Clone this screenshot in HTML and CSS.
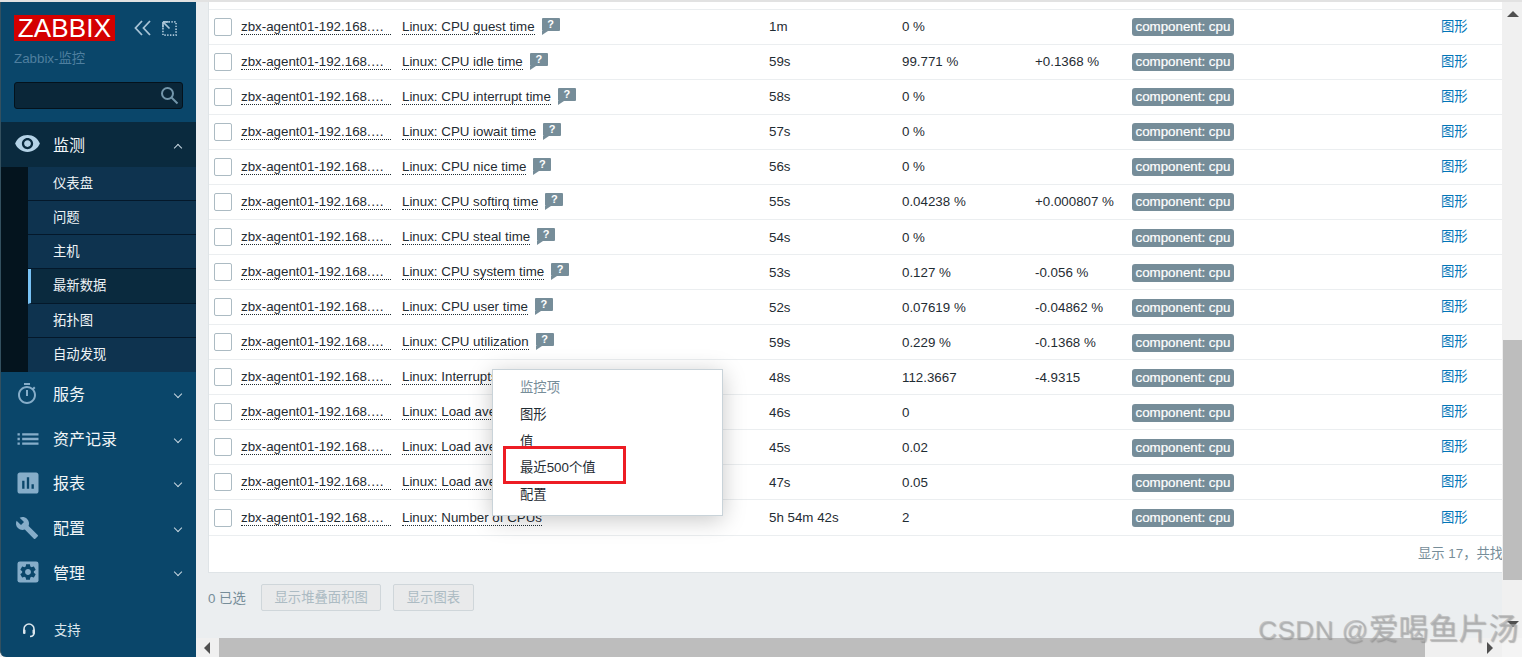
FILE: index.html
```html
<!DOCTYPE html>
<html lang="zh-CN">
<head>
    <meta charset="UTF-8">
    <title>最新数据</title>
    <link rel="stylesheet" href="styles.css">
</head>
<body>
    <div class="top-strip"></div>
    <div class="app">
        <aside class="sidebar">
            <div class="brand-row">
                <div class="logo">ZABBIX</div>
                <svg class="tool-icon" width="18" height="16" viewBox="0 0 18 16"><path d="M8 1 1.500 8 8 15M16 1 9.500 8 16 15"/></svg>
                <svg class="tool-icon expand" width="15" height="15" viewBox="0 0 16 16"><path d="M4 1h11v14H1V4" stroke-dasharray="1.500 1.500"/><path d="M1 1h6M1 1v6M1 1l7 7"/></svg>
            </div>
            <div class="server-name">Zabbix-监控</div>
            <div class="search">
                <svg width="19" height="19" viewBox="0 0 19 19"><circle cx="7.500" cy="7.500" r="5.500"/><path d="m11.500 11.500 6 6"/></svg>
            </div>

            <nav class="nav">
                <div class="nav-item active">
                    <svg class="nav-icon eye" viewBox="0 0 24 24"><path d="M12 4.500C7 4.500 2.730 7.610 1 12c1.730 4.390 6 7.500 11 7.500s9.270-3.110 11-7.500c-1.730-4.390-6-7.500-11-7.500zM12 17c-2.760 0-5-2.240-5-5s2.240-5 5-5 5 2.240 5 5-2.240 5-5 5zm0-8c-1.660 0-3 1.340-3 3s1.340 3 3 3 3-1.340 3-3-1.340-3-3-3z"/></svg>
                    <span class="nav-label">监测</span>
                    <span class="chevron up"></span>
                </div>
                <div class="subnav">
                    <div class="sub-item">仪表盘</div>
                    <div class="sub-item">问题</div>
                    <div class="sub-item">主机</div>
                    <div class="sub-item current">最新数据</div>
                    <div class="sub-item">拓扑图</div>
                    <div class="sub-item">自动发现</div>
                </div>
                <div class="nav-item">
                    <svg class="nav-icon small" viewBox="0 0 24 24"><path d="M15 1H9v2h6V1zm-4 13h2V8h-2v6zm8.030-6.610 1.420-1.420c-.430-.510-.900-.990-1.410-1.410l-1.420 1.420C16.070 4.740 14.120 4 12 4c-4.970 0-9 4.030-9 9s4.020 9 9 9 9-4.030 9-9c0-2.120-.740-4.070-1.970-5.610zM12 20c-3.870 0-7-3.130-7-7s3.130-7 7-7 7 3.130 7 7-3.130 7-7 7z"/></svg>
                    <span class="nav-label">服务</span>
                    <span class="chevron"></span>
                </div>
                <div class="nav-item">
                    <svg class="nav-icon" viewBox="0 0 24 24"><path d="M3 13h2v-2H3v2zm0 4h2v-2H3v2zm0-8h2V7H3v2zm4 4h14v-2H7v2zm0 4h14v-2H7v2zM7 7v2h14V7H7z"/></svg>
                    <span class="nav-label">资产记录</span>
                    <span class="chevron"></span>
                </div>
                <div class="nav-item">
                    <svg class="nav-icon" viewBox="0 0 24 24"><path d="M19 3H5c-1.100 0-2 .900-2 2v14c0 1.100.900 2 2 2h14c1.100 0 2-.900 2-2V5c0-1.100-.900-2-2-2zM9 17H7v-7h2v7zm4 0h-2V7h2v10zm4 0h-2v-4h2v4z"/></svg>
                    <span class="nav-label">报表</span>
                    <span class="chevron"></span>
                </div>
                <div class="nav-item">
                    <svg class="nav-icon small" viewBox="0 0 24 24"><path d="M22.700 19l-9.100-9.100c.900-2.300.400-5-1.500-6.900-2-2-5-2.400-7.400-1.300L9 6 6 9 1.600 4.700C.400 7.100.900 10.100 2.900 12.100c1.900 1.900 4.600 2.400 6.900 1.500l9.100 9.100c.400.400 1 .400 1.400 0l2.300-2.300c.500-.400.500-1.100.100-1.400z"/></svg>
                    <span class="nav-label">配置</span>
                    <span class="chevron"></span>
                </div>
                <div class="nav-item">
                    <svg class="nav-icon" viewBox="0 0 24 24"><rect x="3" y="3" width="18" height="18" rx="2"/><path class="gear" transform="translate(3.600 3.600) scale(.7)" d="M19.140 12.940c.040-.300.060-.610.060-.940 0-.320-.020-.640-.070-.940l2.030-1.580c.180-.140.230-.410.120-.610l-1.920-3.320c-.120-.220-.370-.290-.590-.220l-2.390.960c-.500-.380-1.030-.700-1.620-.940l-.360-2.540c-.040-.240-.240-.410-.480-.410h-3.840c-.240 0-.430.170-.470.410l-.360 2.540c-.590.240-1.130.570-1.620.940l-2.390-.960c-.220-.080-.470 0-.590.220L2.740 8.870c-.120.210-.080.470.120.610l2.030 1.580c-.050.300-.090.630-.090.940s.020.640.070.940l-2.030 1.580c-.180.140-.230.410-.120.610l1.920 3.320c.120.220.370.290.590.220l2.390-.960c.500.380 1.030.700 1.620.940l.360 2.540c.050.240.240.410.480.410h3.840c.240 0 .440-.170.470-.410l.360-2.540c.590-.240 1.130-.560 1.620-.940l2.390.960c.220.080.470 0 .590-.220l1.920-3.320c.120-.220.070-.470-.120-.610l-2.010-1.580zM12 15.600c-1.980 0-3.600-1.620-3.600-3.600s1.620-3.600 3.600-3.600 3.600 1.620 3.600 3.600-1.620 3.600-3.600 3.600z"/></svg>
                    <span class="nav-label">管理</span>
                    <span class="chevron"></span>
                </div>
            </nav>

            <div class="support">
                <svg width="14" height="16" viewBox="0 0 14 16"><path d="M2 9V7a5 5 0 0 1 10 0v2M12 11c0 2-1.500 3.300-4 3.500"/><rect x="1" y="7.500" width="2.500" height="4.500" rx="1" class="pad"/><rect x="10.500" y="7.500" width="2.500" height="4.500" rx="1" class="pad"/></svg>
                <span>支持</span>
            </div>
        </aside>

        <main class="main">
            <div class="main-top">
                <div class="viewport">
                    <div class="panel">
                        <div class="row">
                            <span class="check"></span><span class="host">zbx-agent01-192.168.…</span>
                            <span class="item"><span class="item-name">Linux: CPU guest time</span><span class="hint">?</span></span>
                            <span class="age">1m</span><span class="value">0 %</span><span class="change"></span>
                            <span class="tags"><span class="tag">component: cpu</span></span><span class="graph">图形</span>
                        </div>
                        <div class="row">
                            <span class="check"></span><span class="host">zbx-agent01-192.168.…</span>
                            <span class="item"><span class="item-name">Linux: CPU idle time</span><span class="hint">?</span></span>
                            <span class="age">59s</span><span class="value">99.771 %</span><span class="change">+0.1368 %</span>
                            <span class="tags"><span class="tag">component: cpu</span></span><span class="graph">图形</span>
                        </div>
                        <div class="row">
                            <span class="check"></span><span class="host">zbx-agent01-192.168.…</span>
                            <span class="item"><span class="item-name">Linux: CPU interrupt time</span><span class="hint">?</span></span>
                            <span class="age">58s</span><span class="value">0 %</span><span class="change"></span>
                            <span class="tags"><span class="tag">component: cpu</span></span><span class="graph">图形</span>
                        </div>
                        <div class="row">
                            <span class="check"></span><span class="host">zbx-agent01-192.168.…</span>
                            <span class="item"><span class="item-name">Linux: CPU iowait time</span><span class="hint">?</span></span>
                            <span class="age">57s</span><span class="value">0 %</span><span class="change"></span>
                            <span class="tags"><span class="tag">component: cpu</span></span><span class="graph">图形</span>
                        </div>
                        <div class="row">
                            <span class="check"></span><span class="host">zbx-agent01-192.168.…</span>
                            <span class="item"><span class="item-name">Linux: CPU nice time</span><span class="hint">?</span></span>
                            <span class="age">56s</span><span class="value">0 %</span><span class="change"></span>
                            <span class="tags"><span class="tag">component: cpu</span></span><span class="graph">图形</span>
                        </div>
                        <div class="row">
                            <span class="check"></span><span class="host">zbx-agent01-192.168.…</span>
                            <span class="item"><span class="item-name">Linux: CPU softirq time</span><span class="hint">?</span></span>
                            <span class="age">55s</span><span class="value">0.04238 %</span><span class="change">+0.000807 %</span>
                            <span class="tags"><span class="tag">component: cpu</span></span><span class="graph">图形</span>
                        </div>
                        <div class="row">
                            <span class="check"></span><span class="host">zbx-agent01-192.168.…</span>
                            <span class="item"><span class="item-name">Linux: CPU steal time</span><span class="hint">?</span></span>
                            <span class="age">54s</span><span class="value">0 %</span><span class="change"></span>
                            <span class="tags"><span class="tag">component: cpu</span></span><span class="graph">图形</span>
                        </div>
                        <div class="row">
                            <span class="check"></span><span class="host">zbx-agent01-192.168.…</span>
                            <span class="item"><span class="item-name">Linux: CPU system time</span><span class="hint">?</span></span>
                            <span class="age">53s</span><span class="value">0.127 %</span><span class="change">-0.056 %</span>
                            <span class="tags"><span class="tag">component: cpu</span></span><span class="graph">图形</span>
                        </div>
                        <div class="row">
                            <span class="check"></span><span class="host">zbx-agent01-192.168.…</span>
                            <span class="item"><span class="item-name">Linux: CPU user time</span><span class="hint">?</span></span>
                            <span class="age">52s</span><span class="value">0.07619 %</span><span class="change">-0.04862 %</span>
                            <span class="tags"><span class="tag">component: cpu</span></span><span class="graph">图形</span>
                        </div>
                        <div class="row">
                            <span class="check"></span><span class="host">zbx-agent01-192.168.…</span>
                            <span class="item"><span class="item-name">Linux: CPU utilization</span><span class="hint">?</span></span>
                            <span class="age">59s</span><span class="value">0.229 %</span><span class="change">-0.1368 %</span>
                            <span class="tags"><span class="tag">component: cpu</span></span><span class="graph">图形</span>
                        </div>
                        <div class="row">
                            <span class="check"></span><span class="host">zbx-agent01-192.168.…</span>
                            <span class="item"><span class="item-name">Linux: Interrupts per second</span></span>
                            <span class="age">48s</span><span class="value">112.3667</span><span class="change">-4.9315</span>
                            <span class="tags"><span class="tag">component: cpu</span></span><span class="graph">图形</span>
                        </div>
                        <div class="row">
                            <span class="check"></span><span class="host">zbx-agent01-192.168.…</span>
                            <span class="item"><span class="item-name">Linux: Load average (1m avg)</span></span>
                            <span class="age">46s</span><span class="value">0</span><span class="change"></span>
                            <span class="tags"><span class="tag">component: cpu</span></span><span class="graph">图形</span>
                        </div>
                        <div class="row">
                            <span class="check"></span><span class="host">zbx-agent01-192.168.…</span>
                            <span class="item"><span class="item-name">Linux: Load average (5m avg)</span></span>
                            <span class="age">45s</span><span class="value">0.02</span><span class="change"></span>
                            <span class="tags"><span class="tag">component: cpu</span></span><span class="graph">图形</span>
                        </div>
                        <div class="row">
                            <span class="check"></span><span class="host">zbx-agent01-192.168.…</span>
                            <span class="item"><span class="item-name">Linux: Load average (15m avg)</span></span>
                            <span class="age">47s</span><span class="value">0.05</span><span class="change"></span>
                            <span class="tags"><span class="tag">component: cpu</span></span><span class="graph">图形</span>
                        </div>
                        <div class="row">
                            <span class="check"></span><span class="host">zbx-agent01-192.168.…</span>
                            <span class="item"><span class="item-name">Linux: Number of CPUs</span></span>
                            <span class="age">5h 54m 42s</span><span class="value">2</span><span class="change"></span>
                            <span class="tags"><span class="tag">component: cpu</span></span><span class="graph">图形</span>
                        </div>
                        <div class="panel-foot">显示 17，共找到 17</div>
                    </div>
                    <div class="actions">
                        <span class="selected-count">0 已选</span>
                        <span class="btn">显示堆叠面积图</span>
                        <span class="btn">显示图表</span>
                    </div>
                </div>
                <div class="vbar">
                    <span class="arrow arrow-up"></span>
                    <span class="vbar-thumb"></span>
                    <span class="arrow arrow-down"></span>
                </div>
            </div>
            <div class="hbar">
                <span class="hbar-btn"><span class="arrow arrow-left"></span></span>
                <span class="hbar-thumb"></span>
                <span class="hbar-btn end"><span class="arrow arrow-right"></span></span>
                <span class="hbar-corner"></span>
            </div>
        </main>
    </div>

    <div class="menu">
        <div class="menu-title">监控项</div>
        <div class="menu-link">图形</div>
        <div class="menu-link">值</div>
        <div class="menu-link">最近500个值</div>
        <div class="menu-link">配置</div>
    </div>
    <div class="red-box"></div>
    <div class="watermark">CSDN @<span class="watermark-name">爱喝鱼片汤</span></div>
</body>
</html>
```

FILE: styles.css
```css
* {
    box-sizing: border-box;
}
html, body {
    height: 100%;
}
body {
    margin: 0;
    display: flex;
    flex-direction: column;
    overflow: hidden;
    font-family: "Liberation Sans", "Noto Sans CJK SC", sans-serif;
    font-size: 13.33px;
    color: #1f2c33;
    background: #ebeef0;
}
.top-strip {
    height: 2px;
    flex: none;
    background: #e2e2e2;
}
.app {
    flex: 1;
    display: flex;
    min-height: 0;
}

/* sidebar */
.sidebar {
    width: 196px;
    flex: none;
    display: flex;
    flex-direction: column;
    background: #0a466a;
    border-left: 1px solid #33505f;
    border-bottom-left-radius: 6px;
    color: #f2f2f2;
}
.brand-row {
    display: flex;
    align-items: center;
    height: 26px;
    margin: 13px 0 0 13px;
}
.logo {
    width: 101px;
    height: 26px;
    background: #d40000;
    color: #fff;
    font-size: 26px;
    line-height: 27px;
    text-align: center;
    letter-spacing: .2px;
}
.tool-icon {
    margin-left: 19px;
    fill: none;
    stroke: #a9c4d6;
    stroke-width: 1.8;
}
.tool-icon.expand {
    margin-left: 10px;
}
.server-name {
    margin: 8px 0 0 13px;
    height: 20px;
    line-height: 20px;
    color: #4f7f9f;
}
.search {
    display: flex;
    align-items: center;
    justify-content: flex-end;
    width: 169px;
    height: 27px;
    margin: 13px 0 0 13px;
    padding-right: 3px;
    background: #0a2638;
    border: 1px solid #04121c;
    border-radius: 3px;
}
.search svg {
    fill: none;
    stroke: #7396ab;
    stroke-width: 2;
}
.nav {
    margin-top: 13px;
}
.nav-item {
    position: relative;
    display: flex;
    align-items: center;
    height: 44.6px;
    padding: 0 0 2px 52px;
}
.nav-item.active {
    height: 45px;
    background: #0a2a3e;
}
.nav-icon {
    position: absolute;
    left: 13px;
    top: 8px;
    width: 28px;
    height: 28px;
    fill: #86adc9;
}
.nav-icon.small {
    left: 14px;
    top: 10px;
    width: 24px;
    height: 24px;
}
.nav-icon.eye {
    left: 13px;
    top: 8px;
    width: 27px;
    height: 27px;
    fill: #b4d2e6;
}
.nav-icon .gear {
    fill: #0a466a;
}
.nav-label {
    font-size: 16px;
    color: #f2f6f8;
}
.chevron {
    position: absolute;
    right: 15px;
    top: 19px;
    width: 6px;
    height: 6px;
    border-right: 1.3px solid #c6d6e0;
    border-bottom: 1.3px solid #c6d6e0;
    transform: rotate(45deg);
}
.chevron.up {
    top: 23px;
    transform: rotate(225deg);
}
.subnav {
    padding-left: 27px;
    background: #04141e;
}
.sub-item {
    height: 34.17px;
    padding: 8px 0 0 25px;
    background: #0e334f;
    border-bottom: 1px solid #04182a;
    line-height: 18px;
    color: #eef3f6;
}
.sub-item:last-child {
    border-bottom: 0;
}
.sub-item.current {
    background: #0a2a3e;
    border-left: 3px solid #78c2f5;
    padding-left: 22px;
}
.support {
    display: flex;
    align-items: center;
    gap: 18px;
    margin-top: auto;
    margin-bottom: 18px;
    padding-left: 21px;
    color: #dbe6ed;
}
.support svg {
    fill: none;
    stroke: #dbe6ed;
    stroke-width: 1.6;
}
.support .pad {
    fill: #dbe6ed;
    stroke: none;
}

/* main area */
.main {
    flex: 1;
    min-width: 0;
    display: flex;
    flex-direction: column;
}
.main-top {
    flex: 1;
    min-height: 0;
    display: flex;
}
.viewport {
    flex: 1;
    min-width: 0;
    overflow: hidden;
    padding-left: 12px;
}
.panel {
    width: 1332px;
    padding-top: 6.6px;
    background: #fff;
    border-left: 1px solid #dfe4e7;
    border-bottom: 1px solid #dfe4e7;
}
.row {
    display: grid;
    grid-template-columns: 32px 161px 367px 133px 133px 97px 309px 80px;
    align-items: center;
    height: 35.07px;
    border-top: 1.5px solid #ebeef0;
    white-space: nowrap;
}
.check {
    width: 18px;
    height: 18px;
    margin-left: 5px;
    background: #fff;
    border: 1px solid #acbbc3;
    border-radius: 2px;
}
.host {
    justify-self: start;
    width: 150px;
    border-bottom: 1px dotted #1f2c33;
    line-height: 15px;
    overflow: hidden;
}
.item {
    display: flex;
    align-items: center;
}
.item-name {
    border-bottom: 1px dotted #1f2c33;
    line-height: 15px;
}
.hint {
    position: relative;
    width: 18px;
    height: 13px;
    margin: -5px 0 0 7px;
    background: #768d99;
    border-radius: 1px;
    color: #fff;
    font-size: 11px;
    font-weight: bold;
    line-height: 12px;
    text-align: center;
}
.hint::after {
    content: "";
    position: absolute;
    left: 0;
    top: 13px;
    border-top: 4px solid #768d99;
    border-right: 6px solid transparent;
}
.tag {
    display: inline-block;
    height: 18px;
    padding: 0 3.5px;
    background: #768d99;
    border-radius: 3px;
    color: #fff;
    line-height: 18px;
    -webkit-text-stroke: .2px #fff;
}
.tags {
    padding-top: 1px;
}
.graph {
    padding-bottom: 3px;
    color: #0275b8;
}
.panel-foot {
    height: 37.9px;
    padding: 7px 5px 0 0;
    border-top: 1.5px solid #ebeef0;
    text-align: right;
    color: #768d99;
    white-space: nowrap;
}
.actions {
    display: flex;
    align-items: center;
    gap: 12px;
    height: 27px;
    margin-top: 11px;
}
.selected-count {
    width: 41px;
    color: #768d99;
}
.btn {
    height: 27px;
    padding: 0 12.5px;
    background: #e9eaeb;
    border: 1px solid #cfd6da;
    border-radius: 2px;
    color: #acbbc3;
    line-height: 25px;
}

/* scrollbars */
.vbar {
    position: relative;
    width: 20px;
    flex: none;
    background: #f0f0f0;
}
.vbar-thumb {
    position: absolute;
    left: 1px;
    right: 0;
    top: 338px;
    height: 240px;
    background: #bdbdbd;
}
.arrow {
    position: absolute;
    width: 0;
    height: 0;
}
.arrow-up {
    left: 5px;
    top: 9px;
    border: 6px solid transparent;
    border-top: 0;
    border-bottom: 6px solid #505050;
}
.arrow-down {
    left: 5px;
    bottom: 11px;
    border: 6px solid transparent;
    border-bottom: 0;
    border-top: 6px solid #505050;
}
.hbar {
    height: 19px;
    flex: none;
    display: flex;
    background: #f0f0f0;
}
.hbar-btn {
    position: relative;
    width: 23px;
    flex: none;
}
.hbar-btn.end {
    width: 77px;
}
.hbar-thumb {
    flex: 1;
    background: #bdbdbd;
}
.hbar-corner {
    width: 20px;
    flex: none;
    background: #f4f4f4;
}
.arrow-left {
    left: 8px;
    top: 4px;
    border: 6px solid transparent;
    border-left: 0;
    border-right: 6px solid #505050;
}
.arrow-right {
    right: 9px;
    top: 4px;
    border: 6px solid transparent;
    border-right: 0;
    border-left: 6px solid #505050;
}

/* popup menu */
.menu {
    position: absolute;
    left: 492px;
    top: 369px;
    width: 231px;
    height: 147px;
    padding: 5.4px 0 0 27px;
    background: #fff;
    border: 1px solid #c9d3d9;
    box-shadow: 0 4px 22px rgba(0, 0, 0, 0.22);
}
.menu-title, .menu-link {
    height: 26.7px;
    line-height: 26.7px;
}
.menu-title {
    color: #768d99;
}
.red-box {
    position: absolute;
    left: 503px;
    top: 446px;
    width: 123px;
    height: 38px;
    border: 3px solid #ed1c24;
}
.watermark {
    position: absolute;
    left: 1258px;
    top: 612px;
    font-size: 26px;
    line-height: 34px;
    letter-spacing: .5px;
    color: rgba(170, 170, 170, 0.6);
    text-shadow: 1px 1px 1px rgba(110, 110, 110, 0.45);
    white-space: nowrap;
}
.watermark-name {
    font-size: 30px;
    letter-spacing: 0;
}
```
